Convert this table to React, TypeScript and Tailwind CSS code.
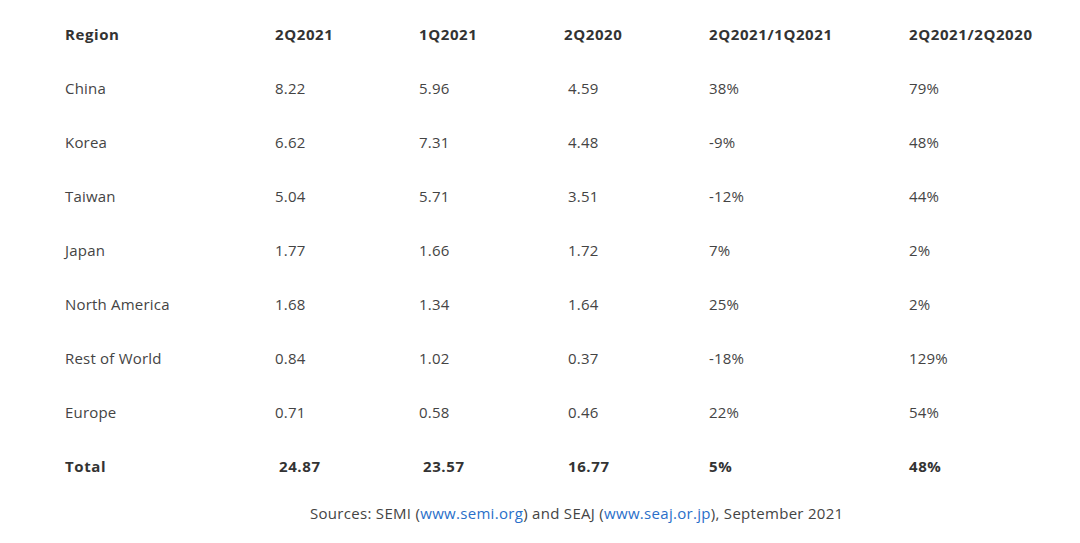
import React from "react";

const rows = [
  ["China", "8.22", "5.96", "4.59", "38%", "79%"],
  ["Korea", "6.62", "7.31", "4.48", "-9%", "48%"],
  ["Taiwan", "5.04", "5.71", "3.51", "-12%", "44%"],
  ["Japan", "1.77", "1.66", "1.72", "7%", "2%"],
  ["North America", "1.68", "1.34", "1.64", "25%", "2%"],
  ["Rest of World", "0.84", "1.02", "0.37", "-18%", "129%"],
  ["Europe", "0.71", "0.58", "0.46", "22%", "54%"],
];

const cols = "grid grid-cols-[210px_144px_145px_145px_200px_1fr] items-center h-[54px]";

export default function App() {
  return (
    <div className="w-[1080px] h-[543px] bg-white text-[#444] text-[15px] tracking-[0.2px] pt-[7px] pl-[65px]" style={{ fontFamily: "'Open Sans', sans-serif" }}>
      {/* Header */}
      <div className={`${cols} font-bold text-[#333] tracking-[0.6px]`}>
        <div>Region</div>
        <div>2Q2021</div>
        <div>1Q2021</div>
        <div>2Q2020</div>
        <div>2Q2021/1Q2021</div>
        <div>2Q2021/2Q2020</div>
      </div>

      {rows.map((r) => (
        <div key={r[0]} className={cols}>
          <div>{r[0]}</div>
          <div>{r[1]}</div>
          <div>{r[2]}</div>
          <div className="pl-[4px]">{r[3]}</div>
          <div>{r[4]}</div>
          <div>{r[5]}</div>
        </div>
      ))}

      <div className={`${cols} font-bold text-[#333] tracking-[0.6px]`}>
        <div>Total</div>
        <div className="pl-[4px]">24.87</div>
        <div className="pl-[4px]">23.57</div>
        <div className="pl-[4px]">16.77</div>
        <div>5%</div>
        <div>48%</div>
      </div>

      <p className="h-[40px] flex items-center pl-[245px] text-[15px] tracking-[0.3px]">
        Sources: SEMI (<a className="text-[#2a6fc9]">www.semi.org</a>) and SEAJ (<a className="text-[#2a6fc9]">www.seaj.or.jp</a>), September 2021
      </p>
    </div>
  );
}
